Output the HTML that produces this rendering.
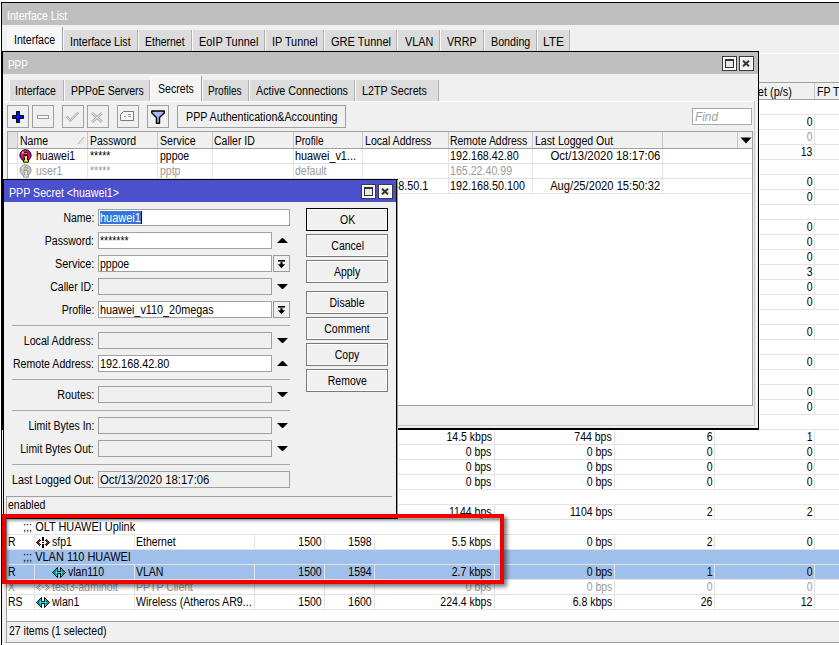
<!DOCTYPE html><html><head><meta charset="utf-8"><style>
html,body{margin:0;padding:0;width:839px;height:645px;overflow:hidden;background:#fff;}
div,svg{position:absolute;}
.t{white-space:nowrap;font-family:"Liberation Sans",sans-serif;}
</style></head><body>
<div style="left:2px;top:3px;width:837px;height:640px;background:#f0f0f0"></div>
<div style="left:1px;top:2px;width:1px;height:643px;background:#000"></div>
<div style="left:1px;top:2px;width:838px;height:1px;background:#000"></div>
<div style="left:2px;top:3px;width:837px;height:22px;background:#bfbfbf"></div>
<div class="t" style="top:9px;font-size:12px;line-height:15px;color:#fff;left:6.97px;transform-origin:0 0;transform:scaleX(0.8759);">Interface List</div>
<div style="left:7px;top:27px;width:56px;height:25px;background:#f7f7f7"></div>
<div style="left:62px;top:27px;width:1px;height:25px;background:#a0a0a0"></div>
<div class="t" style="top:33px;font-size:12px;line-height:15px;color:#000;left:14.17px;transform-origin:0 0;transform:scaleX(0.8820);">Interface</div>
<div style="left:63px;top:30px;width:75px;height:21px;background:#dcdcdc"></div>
<div style="left:137px;top:30px;width:1px;height:21px;background:#b0b0b0"></div>
<div style="left:63px;top:30px;width:1px;height:21px;background:#fafafa"></div>
<div class="t" style="top:35px;font-size:12px;line-height:15px;color:#000;left:69.97px;transform-origin:0 0;transform:scaleX(0.8818);">Interface List</div>
<div style="left:138px;top:30px;width:54px;height:21px;background:#dcdcdc"></div>
<div style="left:191px;top:30px;width:1px;height:21px;background:#b0b0b0"></div>
<div style="left:138px;top:30px;width:1px;height:21px;background:#fafafa"></div>
<div class="t" style="top:35px;font-size:12px;line-height:15px;color:#000;left:144.88px;transform-origin:0 0;transform:scaleX(0.8723);">Ethernet</div>
<div style="left:192px;top:30px;width:73px;height:21px;background:#dcdcdc"></div>
<div style="left:264px;top:30px;width:1px;height:21px;background:#b0b0b0"></div>
<div style="left:192px;top:30px;width:1px;height:21px;background:#fafafa"></div>
<div class="t" style="top:35px;font-size:12px;line-height:15px;color:#000;left:198.55px;transform-origin:0 0;transform:scaleX(0.9102);">EoIP Tunnel</div>
<div style="left:265px;top:30px;width:59px;height:21px;background:#dcdcdc"></div>
<div style="left:323px;top:30px;width:1px;height:21px;background:#b0b0b0"></div>
<div style="left:265px;top:30px;width:1px;height:21px;background:#fafafa"></div>
<div class="t" style="top:35px;font-size:12px;line-height:15px;color:#000;left:271.76px;transform-origin:0 0;transform:scaleX(0.9054);">IP Tunnel</div>
<div style="left:324px;top:30px;width:73px;height:21px;background:#dcdcdc"></div>
<div style="left:396px;top:30px;width:1px;height:21px;background:#b0b0b0"></div>
<div style="left:324px;top:30px;width:1px;height:21px;background:#fafafa"></div>
<div class="t" style="top:35px;font-size:12px;line-height:15px;color:#000;left:331.15px;transform-origin:0 0;transform:scaleX(0.9182);">GRE Tunnel</div>
<div style="left:397px;top:30px;width:43px;height:21px;background:#dcdcdc"></div>
<div style="left:439px;top:30px;width:1px;height:21px;background:#b0b0b0"></div>
<div style="left:397px;top:30px;width:1px;height:21px;background:#fafafa"></div>
<div class="t" style="top:35px;font-size:12px;line-height:15px;color:#000;left:404.56px;transform-origin:0 0;transform:scaleX(0.9028);">VLAN</div>
<div style="left:440px;top:30px;width:44px;height:21px;background:#dcdcdc"></div>
<div style="left:483px;top:30px;width:1px;height:21px;background:#b0b0b0"></div>
<div style="left:440px;top:30px;width:1px;height:21px;background:#fafafa"></div>
<div class="t" style="top:35px;font-size:12px;line-height:15px;color:#000;left:446.97px;transform-origin:0 0;transform:scaleX(0.8874);">VRRP</div>
<div style="left:484px;top:30px;width:53px;height:21px;background:#dcdcdc"></div>
<div style="left:536px;top:30px;width:1px;height:21px;background:#b0b0b0"></div>
<div style="left:484px;top:30px;width:1px;height:21px;background:#fafafa"></div>
<div class="t" style="top:35px;font-size:12px;line-height:15px;color:#000;left:490.66px;transform-origin:0 0;transform:scaleX(0.8922);">Bonding</div>
<div style="left:537px;top:30px;width:33px;height:21px;background:#dcdcdc"></div>
<div style="left:569px;top:30px;width:1px;height:21px;background:#b0b0b0"></div>
<div style="left:537px;top:30px;width:1px;height:21px;background:#fafafa"></div>
<div class="t" style="top:35px;font-size:12px;line-height:15px;color:#000;left:543.00px;transform-origin:0 0;transform:scaleX(0.9991);">LTE</div>
<div style="left:2px;top:53px;width:837px;height:1px;background:#ffffff"></div>
<div style="left:7px;top:82px;width:832px;height:539px;background:#fff"></div>
<div style="left:6px;top:82px;width:1px;height:539px;background:#a0a0a0"></div>
<div style="left:6px;top:82px;width:833px;height:1px;background:#a0a0a0"></div>
<div style="left:7px;top:83px;width:832px;height:16px;background:#f0f0f0"></div>
<div style="left:6px;top:99px;width:833px;height:1px;background:#a0a0a0"></div>
<div style="left:34px;top:83px;width:1px;height:16px;background:#c8c8c8"></div>
<div style="left:134px;top:83px;width:1px;height:16px;background:#c8c8c8"></div>
<div style="left:254px;top:83px;width:1px;height:16px;background:#c8c8c8"></div>
<div style="left:324px;top:83px;width:1px;height:16px;background:#c8c8c8"></div>
<div style="left:374px;top:83px;width:1px;height:16px;background:#c8c8c8"></div>
<div style="left:494px;top:83px;width:1px;height:16px;background:#c8c8c8"></div>
<div style="left:614px;top:83px;width:1px;height:16px;background:#c8c8c8"></div>
<div style="left:714px;top:83px;width:1px;height:16px;background:#c8c8c8"></div>
<div style="left:814px;top:83px;width:1px;height:16px;background:#c8c8c8"></div>
<div class="t" style="top:84.5px;font-size:12px;line-height:15px;color:#000;left:716.95px;transform-origin:0 0;transform:scaleX(0.9133);">Rx Packet (p/s)</div>
<div class="t" style="top:84.5px;font-size:12px;line-height:15px;color:#000;left:816.68px;transform-origin:0 0;transform:scaleX(0.8750);">FP Tx</div>
<div style="left:7px;top:550px;width:832px;height:29px;background:#9fc0ea"></div>
<div style="left:7px;top:114px;width:832px;height:1px;background:#e3e3e3"></div>
<div style="left:7px;top:129px;width:832px;height:1px;background:#e3e3e3"></div>
<div style="left:34px;top:115px;width:1px;height:14px;background:#e3e3e3"></div>
<div style="left:134px;top:115px;width:1px;height:14px;background:#e3e3e3"></div>
<div style="left:254px;top:115px;width:1px;height:14px;background:#e3e3e3"></div>
<div style="left:324px;top:115px;width:1px;height:14px;background:#e3e3e3"></div>
<div style="left:374px;top:115px;width:1px;height:14px;background:#e3e3e3"></div>
<div style="left:494px;top:115px;width:1px;height:14px;background:#e3e3e3"></div>
<div style="left:614px;top:115px;width:1px;height:14px;background:#e3e3e3"></div>
<div style="left:714px;top:115px;width:1px;height:14px;background:#e3e3e3"></div>
<div style="left:814px;top:115px;width:1px;height:14px;background:#e3e3e3"></div>
<div style="left:7px;top:144px;width:832px;height:1px;background:#e3e3e3"></div>
<div style="left:34px;top:130px;width:1px;height:14px;background:#e3e3e3"></div>
<div style="left:134px;top:130px;width:1px;height:14px;background:#e3e3e3"></div>
<div style="left:254px;top:130px;width:1px;height:14px;background:#e3e3e3"></div>
<div style="left:324px;top:130px;width:1px;height:14px;background:#e3e3e3"></div>
<div style="left:374px;top:130px;width:1px;height:14px;background:#e3e3e3"></div>
<div style="left:494px;top:130px;width:1px;height:14px;background:#e3e3e3"></div>
<div style="left:614px;top:130px;width:1px;height:14px;background:#e3e3e3"></div>
<div style="left:714px;top:130px;width:1px;height:14px;background:#e3e3e3"></div>
<div style="left:814px;top:130px;width:1px;height:14px;background:#e3e3e3"></div>
<div style="left:7px;top:159px;width:832px;height:1px;background:#e3e3e3"></div>
<div style="left:34px;top:145px;width:1px;height:14px;background:#e3e3e3"></div>
<div style="left:134px;top:145px;width:1px;height:14px;background:#e3e3e3"></div>
<div style="left:254px;top:145px;width:1px;height:14px;background:#e3e3e3"></div>
<div style="left:324px;top:145px;width:1px;height:14px;background:#e3e3e3"></div>
<div style="left:374px;top:145px;width:1px;height:14px;background:#e3e3e3"></div>
<div style="left:494px;top:145px;width:1px;height:14px;background:#e3e3e3"></div>
<div style="left:614px;top:145px;width:1px;height:14px;background:#e3e3e3"></div>
<div style="left:714px;top:145px;width:1px;height:14px;background:#e3e3e3"></div>
<div style="left:814px;top:145px;width:1px;height:14px;background:#e3e3e3"></div>
<div style="left:7px;top:174px;width:832px;height:1px;background:#e3e3e3"></div>
<div style="left:7px;top:189px;width:832px;height:1px;background:#e3e3e3"></div>
<div style="left:34px;top:175px;width:1px;height:14px;background:#e3e3e3"></div>
<div style="left:134px;top:175px;width:1px;height:14px;background:#e3e3e3"></div>
<div style="left:254px;top:175px;width:1px;height:14px;background:#e3e3e3"></div>
<div style="left:324px;top:175px;width:1px;height:14px;background:#e3e3e3"></div>
<div style="left:374px;top:175px;width:1px;height:14px;background:#e3e3e3"></div>
<div style="left:494px;top:175px;width:1px;height:14px;background:#e3e3e3"></div>
<div style="left:614px;top:175px;width:1px;height:14px;background:#e3e3e3"></div>
<div style="left:714px;top:175px;width:1px;height:14px;background:#e3e3e3"></div>
<div style="left:814px;top:175px;width:1px;height:14px;background:#e3e3e3"></div>
<div style="left:7px;top:204px;width:832px;height:1px;background:#e3e3e3"></div>
<div style="left:34px;top:190px;width:1px;height:14px;background:#e3e3e3"></div>
<div style="left:134px;top:190px;width:1px;height:14px;background:#e3e3e3"></div>
<div style="left:254px;top:190px;width:1px;height:14px;background:#e3e3e3"></div>
<div style="left:324px;top:190px;width:1px;height:14px;background:#e3e3e3"></div>
<div style="left:374px;top:190px;width:1px;height:14px;background:#e3e3e3"></div>
<div style="left:494px;top:190px;width:1px;height:14px;background:#e3e3e3"></div>
<div style="left:614px;top:190px;width:1px;height:14px;background:#e3e3e3"></div>
<div style="left:714px;top:190px;width:1px;height:14px;background:#e3e3e3"></div>
<div style="left:814px;top:190px;width:1px;height:14px;background:#e3e3e3"></div>
<div style="left:7px;top:219px;width:832px;height:1px;background:#e3e3e3"></div>
<div style="left:7px;top:234px;width:832px;height:1px;background:#e3e3e3"></div>
<div style="left:34px;top:220px;width:1px;height:14px;background:#e3e3e3"></div>
<div style="left:134px;top:220px;width:1px;height:14px;background:#e3e3e3"></div>
<div style="left:254px;top:220px;width:1px;height:14px;background:#e3e3e3"></div>
<div style="left:324px;top:220px;width:1px;height:14px;background:#e3e3e3"></div>
<div style="left:374px;top:220px;width:1px;height:14px;background:#e3e3e3"></div>
<div style="left:494px;top:220px;width:1px;height:14px;background:#e3e3e3"></div>
<div style="left:614px;top:220px;width:1px;height:14px;background:#e3e3e3"></div>
<div style="left:714px;top:220px;width:1px;height:14px;background:#e3e3e3"></div>
<div style="left:814px;top:220px;width:1px;height:14px;background:#e3e3e3"></div>
<div style="left:7px;top:249px;width:832px;height:1px;background:#e3e3e3"></div>
<div style="left:34px;top:235px;width:1px;height:14px;background:#e3e3e3"></div>
<div style="left:134px;top:235px;width:1px;height:14px;background:#e3e3e3"></div>
<div style="left:254px;top:235px;width:1px;height:14px;background:#e3e3e3"></div>
<div style="left:324px;top:235px;width:1px;height:14px;background:#e3e3e3"></div>
<div style="left:374px;top:235px;width:1px;height:14px;background:#e3e3e3"></div>
<div style="left:494px;top:235px;width:1px;height:14px;background:#e3e3e3"></div>
<div style="left:614px;top:235px;width:1px;height:14px;background:#e3e3e3"></div>
<div style="left:714px;top:235px;width:1px;height:14px;background:#e3e3e3"></div>
<div style="left:814px;top:235px;width:1px;height:14px;background:#e3e3e3"></div>
<div style="left:7px;top:264px;width:832px;height:1px;background:#e3e3e3"></div>
<div style="left:34px;top:250px;width:1px;height:14px;background:#e3e3e3"></div>
<div style="left:134px;top:250px;width:1px;height:14px;background:#e3e3e3"></div>
<div style="left:254px;top:250px;width:1px;height:14px;background:#e3e3e3"></div>
<div style="left:324px;top:250px;width:1px;height:14px;background:#e3e3e3"></div>
<div style="left:374px;top:250px;width:1px;height:14px;background:#e3e3e3"></div>
<div style="left:494px;top:250px;width:1px;height:14px;background:#e3e3e3"></div>
<div style="left:614px;top:250px;width:1px;height:14px;background:#e3e3e3"></div>
<div style="left:714px;top:250px;width:1px;height:14px;background:#e3e3e3"></div>
<div style="left:814px;top:250px;width:1px;height:14px;background:#e3e3e3"></div>
<div style="left:7px;top:279px;width:832px;height:1px;background:#e3e3e3"></div>
<div style="left:34px;top:265px;width:1px;height:14px;background:#e3e3e3"></div>
<div style="left:134px;top:265px;width:1px;height:14px;background:#e3e3e3"></div>
<div style="left:254px;top:265px;width:1px;height:14px;background:#e3e3e3"></div>
<div style="left:324px;top:265px;width:1px;height:14px;background:#e3e3e3"></div>
<div style="left:374px;top:265px;width:1px;height:14px;background:#e3e3e3"></div>
<div style="left:494px;top:265px;width:1px;height:14px;background:#e3e3e3"></div>
<div style="left:614px;top:265px;width:1px;height:14px;background:#e3e3e3"></div>
<div style="left:714px;top:265px;width:1px;height:14px;background:#e3e3e3"></div>
<div style="left:814px;top:265px;width:1px;height:14px;background:#e3e3e3"></div>
<div style="left:7px;top:294px;width:832px;height:1px;background:#e3e3e3"></div>
<div style="left:34px;top:280px;width:1px;height:14px;background:#e3e3e3"></div>
<div style="left:134px;top:280px;width:1px;height:14px;background:#e3e3e3"></div>
<div style="left:254px;top:280px;width:1px;height:14px;background:#e3e3e3"></div>
<div style="left:324px;top:280px;width:1px;height:14px;background:#e3e3e3"></div>
<div style="left:374px;top:280px;width:1px;height:14px;background:#e3e3e3"></div>
<div style="left:494px;top:280px;width:1px;height:14px;background:#e3e3e3"></div>
<div style="left:614px;top:280px;width:1px;height:14px;background:#e3e3e3"></div>
<div style="left:714px;top:280px;width:1px;height:14px;background:#e3e3e3"></div>
<div style="left:814px;top:280px;width:1px;height:14px;background:#e3e3e3"></div>
<div style="left:7px;top:309px;width:832px;height:1px;background:#e3e3e3"></div>
<div style="left:34px;top:295px;width:1px;height:14px;background:#e3e3e3"></div>
<div style="left:134px;top:295px;width:1px;height:14px;background:#e3e3e3"></div>
<div style="left:254px;top:295px;width:1px;height:14px;background:#e3e3e3"></div>
<div style="left:324px;top:295px;width:1px;height:14px;background:#e3e3e3"></div>
<div style="left:374px;top:295px;width:1px;height:14px;background:#e3e3e3"></div>
<div style="left:494px;top:295px;width:1px;height:14px;background:#e3e3e3"></div>
<div style="left:614px;top:295px;width:1px;height:14px;background:#e3e3e3"></div>
<div style="left:714px;top:295px;width:1px;height:14px;background:#e3e3e3"></div>
<div style="left:814px;top:295px;width:1px;height:14px;background:#e3e3e3"></div>
<div style="left:7px;top:324px;width:832px;height:1px;background:#e3e3e3"></div>
<div style="left:7px;top:339px;width:832px;height:1px;background:#e3e3e3"></div>
<div style="left:34px;top:325px;width:1px;height:14px;background:#e3e3e3"></div>
<div style="left:134px;top:325px;width:1px;height:14px;background:#e3e3e3"></div>
<div style="left:254px;top:325px;width:1px;height:14px;background:#e3e3e3"></div>
<div style="left:324px;top:325px;width:1px;height:14px;background:#e3e3e3"></div>
<div style="left:374px;top:325px;width:1px;height:14px;background:#e3e3e3"></div>
<div style="left:494px;top:325px;width:1px;height:14px;background:#e3e3e3"></div>
<div style="left:614px;top:325px;width:1px;height:14px;background:#e3e3e3"></div>
<div style="left:714px;top:325px;width:1px;height:14px;background:#e3e3e3"></div>
<div style="left:814px;top:325px;width:1px;height:14px;background:#e3e3e3"></div>
<div style="left:7px;top:354px;width:832px;height:1px;background:#e3e3e3"></div>
<div style="left:7px;top:369px;width:832px;height:1px;background:#e3e3e3"></div>
<div style="left:34px;top:355px;width:1px;height:14px;background:#e3e3e3"></div>
<div style="left:134px;top:355px;width:1px;height:14px;background:#e3e3e3"></div>
<div style="left:254px;top:355px;width:1px;height:14px;background:#e3e3e3"></div>
<div style="left:324px;top:355px;width:1px;height:14px;background:#e3e3e3"></div>
<div style="left:374px;top:355px;width:1px;height:14px;background:#e3e3e3"></div>
<div style="left:494px;top:355px;width:1px;height:14px;background:#e3e3e3"></div>
<div style="left:614px;top:355px;width:1px;height:14px;background:#e3e3e3"></div>
<div style="left:714px;top:355px;width:1px;height:14px;background:#e3e3e3"></div>
<div style="left:814px;top:355px;width:1px;height:14px;background:#e3e3e3"></div>
<div style="left:7px;top:384px;width:832px;height:1px;background:#e3e3e3"></div>
<div style="left:7px;top:399px;width:832px;height:1px;background:#e3e3e3"></div>
<div style="left:34px;top:385px;width:1px;height:14px;background:#e3e3e3"></div>
<div style="left:134px;top:385px;width:1px;height:14px;background:#e3e3e3"></div>
<div style="left:254px;top:385px;width:1px;height:14px;background:#e3e3e3"></div>
<div style="left:324px;top:385px;width:1px;height:14px;background:#e3e3e3"></div>
<div style="left:374px;top:385px;width:1px;height:14px;background:#e3e3e3"></div>
<div style="left:494px;top:385px;width:1px;height:14px;background:#e3e3e3"></div>
<div style="left:614px;top:385px;width:1px;height:14px;background:#e3e3e3"></div>
<div style="left:714px;top:385px;width:1px;height:14px;background:#e3e3e3"></div>
<div style="left:814px;top:385px;width:1px;height:14px;background:#e3e3e3"></div>
<div style="left:7px;top:414px;width:832px;height:1px;background:#e3e3e3"></div>
<div style="left:34px;top:400px;width:1px;height:14px;background:#e3e3e3"></div>
<div style="left:134px;top:400px;width:1px;height:14px;background:#e3e3e3"></div>
<div style="left:254px;top:400px;width:1px;height:14px;background:#e3e3e3"></div>
<div style="left:324px;top:400px;width:1px;height:14px;background:#e3e3e3"></div>
<div style="left:374px;top:400px;width:1px;height:14px;background:#e3e3e3"></div>
<div style="left:494px;top:400px;width:1px;height:14px;background:#e3e3e3"></div>
<div style="left:614px;top:400px;width:1px;height:14px;background:#e3e3e3"></div>
<div style="left:714px;top:400px;width:1px;height:14px;background:#e3e3e3"></div>
<div style="left:814px;top:400px;width:1px;height:14px;background:#e3e3e3"></div>
<div style="left:7px;top:429px;width:832px;height:1px;background:#e3e3e3"></div>
<div style="left:7px;top:444px;width:832px;height:1px;background:#e3e3e3"></div>
<div style="left:34px;top:430px;width:1px;height:14px;background:#e3e3e3"></div>
<div style="left:134px;top:430px;width:1px;height:14px;background:#e3e3e3"></div>
<div style="left:254px;top:430px;width:1px;height:14px;background:#e3e3e3"></div>
<div style="left:324px;top:430px;width:1px;height:14px;background:#e3e3e3"></div>
<div style="left:374px;top:430px;width:1px;height:14px;background:#e3e3e3"></div>
<div style="left:494px;top:430px;width:1px;height:14px;background:#e3e3e3"></div>
<div style="left:614px;top:430px;width:1px;height:14px;background:#e3e3e3"></div>
<div style="left:714px;top:430px;width:1px;height:14px;background:#e3e3e3"></div>
<div style="left:814px;top:430px;width:1px;height:14px;background:#e3e3e3"></div>
<div style="left:7px;top:459px;width:832px;height:1px;background:#e3e3e3"></div>
<div style="left:34px;top:445px;width:1px;height:14px;background:#e3e3e3"></div>
<div style="left:134px;top:445px;width:1px;height:14px;background:#e3e3e3"></div>
<div style="left:254px;top:445px;width:1px;height:14px;background:#e3e3e3"></div>
<div style="left:324px;top:445px;width:1px;height:14px;background:#e3e3e3"></div>
<div style="left:374px;top:445px;width:1px;height:14px;background:#e3e3e3"></div>
<div style="left:494px;top:445px;width:1px;height:14px;background:#e3e3e3"></div>
<div style="left:614px;top:445px;width:1px;height:14px;background:#e3e3e3"></div>
<div style="left:714px;top:445px;width:1px;height:14px;background:#e3e3e3"></div>
<div style="left:814px;top:445px;width:1px;height:14px;background:#e3e3e3"></div>
<div style="left:7px;top:474px;width:832px;height:1px;background:#e3e3e3"></div>
<div style="left:34px;top:460px;width:1px;height:14px;background:#e3e3e3"></div>
<div style="left:134px;top:460px;width:1px;height:14px;background:#e3e3e3"></div>
<div style="left:254px;top:460px;width:1px;height:14px;background:#e3e3e3"></div>
<div style="left:324px;top:460px;width:1px;height:14px;background:#e3e3e3"></div>
<div style="left:374px;top:460px;width:1px;height:14px;background:#e3e3e3"></div>
<div style="left:494px;top:460px;width:1px;height:14px;background:#e3e3e3"></div>
<div style="left:614px;top:460px;width:1px;height:14px;background:#e3e3e3"></div>
<div style="left:714px;top:460px;width:1px;height:14px;background:#e3e3e3"></div>
<div style="left:814px;top:460px;width:1px;height:14px;background:#e3e3e3"></div>
<div style="left:7px;top:489px;width:832px;height:1px;background:#e3e3e3"></div>
<div style="left:34px;top:475px;width:1px;height:14px;background:#e3e3e3"></div>
<div style="left:134px;top:475px;width:1px;height:14px;background:#e3e3e3"></div>
<div style="left:254px;top:475px;width:1px;height:14px;background:#e3e3e3"></div>
<div style="left:324px;top:475px;width:1px;height:14px;background:#e3e3e3"></div>
<div style="left:374px;top:475px;width:1px;height:14px;background:#e3e3e3"></div>
<div style="left:494px;top:475px;width:1px;height:14px;background:#e3e3e3"></div>
<div style="left:614px;top:475px;width:1px;height:14px;background:#e3e3e3"></div>
<div style="left:714px;top:475px;width:1px;height:14px;background:#e3e3e3"></div>
<div style="left:814px;top:475px;width:1px;height:14px;background:#e3e3e3"></div>
<div style="left:7px;top:504px;width:832px;height:1px;background:#e3e3e3"></div>
<div style="left:7px;top:519px;width:832px;height:1px;background:#e3e3e3"></div>
<div style="left:34px;top:505px;width:1px;height:14px;background:#e3e3e3"></div>
<div style="left:134px;top:505px;width:1px;height:14px;background:#e3e3e3"></div>
<div style="left:254px;top:505px;width:1px;height:14px;background:#e3e3e3"></div>
<div style="left:324px;top:505px;width:1px;height:14px;background:#e3e3e3"></div>
<div style="left:374px;top:505px;width:1px;height:14px;background:#e3e3e3"></div>
<div style="left:494px;top:505px;width:1px;height:14px;background:#e3e3e3"></div>
<div style="left:614px;top:505px;width:1px;height:14px;background:#e3e3e3"></div>
<div style="left:714px;top:505px;width:1px;height:14px;background:#e3e3e3"></div>
<div style="left:814px;top:505px;width:1px;height:14px;background:#e3e3e3"></div>
<div style="left:7px;top:534px;width:832px;height:1px;background:#e3e3e3"></div>
<div style="left:7px;top:549px;width:832px;height:1px;background:#e3e3e3"></div>
<div style="left:34px;top:535px;width:1px;height:14px;background:#e3e3e3"></div>
<div style="left:134px;top:535px;width:1px;height:14px;background:#e3e3e3"></div>
<div style="left:254px;top:535px;width:1px;height:14px;background:#e3e3e3"></div>
<div style="left:324px;top:535px;width:1px;height:14px;background:#e3e3e3"></div>
<div style="left:374px;top:535px;width:1px;height:14px;background:#e3e3e3"></div>
<div style="left:494px;top:535px;width:1px;height:14px;background:#e3e3e3"></div>
<div style="left:614px;top:535px;width:1px;height:14px;background:#e3e3e3"></div>
<div style="left:714px;top:535px;width:1px;height:14px;background:#e3e3e3"></div>
<div style="left:814px;top:535px;width:1px;height:14px;background:#e3e3e3"></div>
<div style="left:7px;top:564px;width:832px;height:1px;background:#e3e3e3"></div>
<div style="left:7px;top:579px;width:832px;height:1px;background:#e3e3e3"></div>
<div style="left:34px;top:565px;width:1px;height:14px;background:#e3e3e3"></div>
<div style="left:134px;top:565px;width:1px;height:14px;background:#e3e3e3"></div>
<div style="left:254px;top:565px;width:1px;height:14px;background:#e3e3e3"></div>
<div style="left:324px;top:565px;width:1px;height:14px;background:#e3e3e3"></div>
<div style="left:374px;top:565px;width:1px;height:14px;background:#e3e3e3"></div>
<div style="left:494px;top:565px;width:1px;height:14px;background:#e3e3e3"></div>
<div style="left:614px;top:565px;width:1px;height:14px;background:#e3e3e3"></div>
<div style="left:714px;top:565px;width:1px;height:14px;background:#e3e3e3"></div>
<div style="left:814px;top:565px;width:1px;height:14px;background:#e3e3e3"></div>
<div style="left:7px;top:594px;width:832px;height:1px;background:#e3e3e3"></div>
<div style="left:34px;top:580px;width:1px;height:14px;background:#e3e3e3"></div>
<div style="left:134px;top:580px;width:1px;height:14px;background:#e3e3e3"></div>
<div style="left:254px;top:580px;width:1px;height:14px;background:#e3e3e3"></div>
<div style="left:324px;top:580px;width:1px;height:14px;background:#e3e3e3"></div>
<div style="left:374px;top:580px;width:1px;height:14px;background:#e3e3e3"></div>
<div style="left:494px;top:580px;width:1px;height:14px;background:#e3e3e3"></div>
<div style="left:614px;top:580px;width:1px;height:14px;background:#e3e3e3"></div>
<div style="left:714px;top:580px;width:1px;height:14px;background:#e3e3e3"></div>
<div style="left:814px;top:580px;width:1px;height:14px;background:#e3e3e3"></div>
<div style="left:7px;top:609px;width:832px;height:1px;background:#e3e3e3"></div>
<div style="left:34px;top:595px;width:1px;height:14px;background:#e3e3e3"></div>
<div style="left:134px;top:595px;width:1px;height:14px;background:#e3e3e3"></div>
<div style="left:254px;top:595px;width:1px;height:14px;background:#e3e3e3"></div>
<div style="left:324px;top:595px;width:1px;height:14px;background:#e3e3e3"></div>
<div style="left:374px;top:595px;width:1px;height:14px;background:#e3e3e3"></div>
<div style="left:494px;top:595px;width:1px;height:14px;background:#e3e3e3"></div>
<div style="left:614px;top:595px;width:1px;height:14px;background:#e3e3e3"></div>
<div style="left:714px;top:595px;width:1px;height:14px;background:#e3e3e3"></div>
<div style="left:814px;top:595px;width:1px;height:14px;background:#e3e3e3"></div>
<div class="t" style="top:115px;font-size:12px;line-height:15px;color:#000;left:805.55px;width:6.67px;text-align:right;transform-origin:100% 0;transform:scaleX(0.8750);">0</div>
<div class="t" style="top:130px;font-size:12px;line-height:15px;color:#9a9a9a;left:805.55px;width:6.67px;text-align:right;transform-origin:100% 0;transform:scaleX(0.8750);">0</div>
<div class="t" style="top:145px;font-size:12px;line-height:15px;color:#000;left:798.88px;width:13.35px;text-align:right;transform-origin:100% 0;transform:scaleX(0.8750);">13</div>
<div class="t" style="top:175px;font-size:12px;line-height:15px;color:#000;left:805.55px;width:6.67px;text-align:right;transform-origin:100% 0;transform:scaleX(0.8750);">0</div>
<div class="t" style="top:190px;font-size:12px;line-height:15px;color:#000;left:805.55px;width:6.67px;text-align:right;transform-origin:100% 0;transform:scaleX(0.8750);">0</div>
<div class="t" style="top:220px;font-size:12px;line-height:15px;color:#000;left:805.55px;width:6.67px;text-align:right;transform-origin:100% 0;transform:scaleX(0.8750);">0</div>
<div class="t" style="top:235px;font-size:12px;line-height:15px;color:#000;left:805.55px;width:6.67px;text-align:right;transform-origin:100% 0;transform:scaleX(0.8750);">0</div>
<div class="t" style="top:250px;font-size:12px;line-height:15px;color:#000;left:805.55px;width:6.67px;text-align:right;transform-origin:100% 0;transform:scaleX(0.8750);">0</div>
<div class="t" style="top:265px;font-size:12px;line-height:15px;color:#000;left:805.55px;width:6.67px;text-align:right;transform-origin:100% 0;transform:scaleX(0.8750);">3</div>
<div class="t" style="top:280px;font-size:12px;line-height:15px;color:#000;left:805.55px;width:6.67px;text-align:right;transform-origin:100% 0;transform:scaleX(0.8750);">0</div>
<div class="t" style="top:295px;font-size:12px;line-height:15px;color:#000;left:805.55px;width:6.67px;text-align:right;transform-origin:100% 0;transform:scaleX(0.8750);">0</div>
<div class="t" style="top:325px;font-size:12px;line-height:15px;color:#000;left:805.55px;width:6.67px;text-align:right;transform-origin:100% 0;transform:scaleX(0.8750);">0</div>
<div class="t" style="top:355px;font-size:12px;line-height:15px;color:#000;left:805.55px;width:6.67px;text-align:right;transform-origin:100% 0;transform:scaleX(0.8750);">0</div>
<div class="t" style="top:385px;font-size:12px;line-height:15px;color:#000;left:805.55px;width:6.67px;text-align:right;transform-origin:100% 0;transform:scaleX(0.8750);">0</div>
<div class="t" style="top:400px;font-size:12px;line-height:15px;color:#000;left:805.55px;width:6.67px;text-align:right;transform-origin:100% 0;transform:scaleX(0.8750);">0</div>
<div class="t" style="top:430px;font-size:12px;line-height:15px;color:#000;left:439.59px;width:52.04px;text-align:right;transform-origin:100% 0;transform:scaleX(0.8750);">14.5 kbps</div>
<div class="t" style="top:430px;font-size:12px;line-height:15px;color:#000;left:569.32px;width:42.70px;text-align:right;transform-origin:100% 0;transform:scaleX(0.8750);">744 bps</div>
<div class="t" style="top:430px;font-size:12px;line-height:15px;color:#000;left:705.85px;width:6.67px;text-align:right;transform-origin:100% 0;transform:scaleX(0.8750);">6</div>
<div class="t" style="top:430px;font-size:12px;line-height:15px;color:#000;left:805.55px;width:6.67px;text-align:right;transform-origin:100% 0;transform:scaleX(0.8750);">1</div>
<div class="t" style="top:445px;font-size:12px;line-height:15px;color:#000;left:462.27px;width:29.35px;text-align:right;transform-origin:100% 0;transform:scaleX(0.8750);">0 bps</div>
<div class="t" style="top:445px;font-size:12px;line-height:15px;color:#000;left:582.67px;width:29.35px;text-align:right;transform-origin:100% 0;transform:scaleX(0.8750);">0 bps</div>
<div class="t" style="top:445px;font-size:12px;line-height:15px;color:#000;left:705.85px;width:6.67px;text-align:right;transform-origin:100% 0;transform:scaleX(0.8750);">0</div>
<div class="t" style="top:445px;font-size:12px;line-height:15px;color:#000;left:805.55px;width:6.67px;text-align:right;transform-origin:100% 0;transform:scaleX(0.8750);">0</div>
<div class="t" style="top:460px;font-size:12px;line-height:15px;color:#000;left:462.27px;width:29.35px;text-align:right;transform-origin:100% 0;transform:scaleX(0.8750);">0 bps</div>
<div class="t" style="top:460px;font-size:12px;line-height:15px;color:#000;left:582.67px;width:29.35px;text-align:right;transform-origin:100% 0;transform:scaleX(0.8750);">0 bps</div>
<div class="t" style="top:460px;font-size:12px;line-height:15px;color:#000;left:705.85px;width:6.67px;text-align:right;transform-origin:100% 0;transform:scaleX(0.8750);">0</div>
<div class="t" style="top:460px;font-size:12px;line-height:15px;color:#000;left:805.55px;width:6.67px;text-align:right;transform-origin:100% 0;transform:scaleX(0.8750);">0</div>
<div class="t" style="top:475px;font-size:12px;line-height:15px;color:#000;left:462.27px;width:29.35px;text-align:right;transform-origin:100% 0;transform:scaleX(0.8750);">0 bps</div>
<div class="t" style="top:475px;font-size:12px;line-height:15px;color:#000;left:582.67px;width:29.35px;text-align:right;transform-origin:100% 0;transform:scaleX(0.8750);">0 bps</div>
<div class="t" style="top:475px;font-size:12px;line-height:15px;color:#000;left:705.85px;width:6.67px;text-align:right;transform-origin:100% 0;transform:scaleX(0.8750);">0</div>
<div class="t" style="top:475px;font-size:12px;line-height:15px;color:#000;left:805.55px;width:6.67px;text-align:right;transform-origin:100% 0;transform:scaleX(0.8750);">0</div>
<div class="t" style="top:505px;font-size:12px;line-height:15px;color:#000;left:443.14px;width:48.48px;text-align:right;transform-origin:100% 0;transform:scaleX(0.8750);">1144 bps</div>
<div class="t" style="top:505px;font-size:12px;line-height:15px;color:#000;left:563.54px;width:48.48px;text-align:right;transform-origin:100% 0;transform:scaleX(0.8750);">1104 bps</div>
<div class="t" style="top:505px;font-size:12px;line-height:15px;color:#000;left:705.85px;width:6.67px;text-align:right;transform-origin:100% 0;transform:scaleX(0.8750);">2</div>
<div class="t" style="top:505px;font-size:12px;line-height:15px;color:#000;left:805.55px;width:6.67px;text-align:right;transform-origin:100% 0;transform:scaleX(0.8750);">2</div>
<div class="t" style="top:535px;font-size:12px;line-height:15px;color:#000;left:8.47px;transform-origin:0 0;transform:scaleX(0.8750);">R</div>
<div class="t" style="top:535px;font-size:12px;line-height:15px;color:#000;left:52.27px;transform-origin:0 0;transform:scaleX(0.8750);">sfp1</div>
<div class="t" style="top:535px;font-size:12px;line-height:15px;color:#000;left:136.47px;transform-origin:0 0;transform:scaleX(0.8750);">Ethernet</div>
<div class="t" style="top:535px;font-size:12px;line-height:15px;color:#000;left:295.33px;width:26.69px;text-align:right;transform-origin:100% 0;transform:scaleX(0.8750);">1500</div>
<div class="t" style="top:535px;font-size:12px;line-height:15px;color:#000;left:345.23px;width:26.69px;text-align:right;transform-origin:100% 0;transform:scaleX(0.8750);">1598</div>
<div class="t" style="top:535px;font-size:12px;line-height:15px;color:#000;left:446.26px;width:45.36px;text-align:right;transform-origin:100% 0;transform:scaleX(0.8750);">5.5 kbps</div>
<div class="t" style="top:535px;font-size:12px;line-height:15px;color:#000;left:582.67px;width:29.35px;text-align:right;transform-origin:100% 0;transform:scaleX(0.8750);">0 bps</div>
<div class="t" style="top:535px;font-size:12px;line-height:15px;color:#000;left:705.85px;width:6.67px;text-align:right;transform-origin:100% 0;transform:scaleX(0.8750);">2</div>
<div class="t" style="top:535px;font-size:12px;line-height:15px;color:#000;left:805.55px;width:6.67px;text-align:right;transform-origin:100% 0;transform:scaleX(0.8750);">0</div>
<div class="t" style="top:565px;font-size:12px;line-height:15px;color:#000;left:8.47px;transform-origin:0 0;transform:scaleX(0.8750);">R</div>
<div class="t" style="top:565px;font-size:12px;line-height:15px;color:#000;left:68.47px;transform-origin:0 0;transform:scaleX(0.8750);">vlan110</div>
<div class="t" style="top:565px;font-size:12px;line-height:15px;color:#000;left:136.47px;transform-origin:0 0;transform:scaleX(0.8750);">VLAN</div>
<div class="t" style="top:565px;font-size:12px;line-height:15px;color:#000;left:295.33px;width:26.69px;text-align:right;transform-origin:100% 0;transform:scaleX(0.8750);">1500</div>
<div class="t" style="top:565px;font-size:12px;line-height:15px;color:#000;left:345.23px;width:26.69px;text-align:right;transform-origin:100% 0;transform:scaleX(0.8750);">1594</div>
<div class="t" style="top:565px;font-size:12px;line-height:15px;color:#000;left:446.26px;width:45.36px;text-align:right;transform-origin:100% 0;transform:scaleX(0.8750);">2.7 kbps</div>
<div class="t" style="top:565px;font-size:12px;line-height:15px;color:#000;left:582.67px;width:29.35px;text-align:right;transform-origin:100% 0;transform:scaleX(0.8750);">0 bps</div>
<div class="t" style="top:565px;font-size:12px;line-height:15px;color:#000;left:705.85px;width:6.67px;text-align:right;transform-origin:100% 0;transform:scaleX(0.8750);">1</div>
<div class="t" style="top:565px;font-size:12px;line-height:15px;color:#000;left:805.55px;width:6.67px;text-align:right;transform-origin:100% 0;transform:scaleX(0.8750);">0</div>
<div class="t" style="top:580px;font-size:12px;line-height:15px;color:#9a9a9a;left:8.47px;transform-origin:0 0;transform:scaleX(0.8750);">X</div>
<div class="t" style="top:580px;font-size:12px;line-height:15px;color:#9a9a9a;left:52.27px;transform-origin:0 0;transform:scaleX(0.8750);">test3-adminolt</div>
<div class="t" style="top:580px;font-size:12px;line-height:15px;color:#9a9a9a;left:136.47px;transform-origin:0 0;transform:scaleX(0.8750);">PPTP Client</div>
<div class="t" style="top:580px;font-size:12px;line-height:15px;color:#9a9a9a;left:462.27px;width:29.35px;text-align:right;transform-origin:100% 0;transform:scaleX(0.8750);">0 bps</div>
<div class="t" style="top:580px;font-size:12px;line-height:15px;color:#9a9a9a;left:582.67px;width:29.35px;text-align:right;transform-origin:100% 0;transform:scaleX(0.8750);">0 bps</div>
<div class="t" style="top:580px;font-size:12px;line-height:15px;color:#9a9a9a;left:705.85px;width:6.67px;text-align:right;transform-origin:100% 0;transform:scaleX(0.8750);">0</div>
<div class="t" style="top:580px;font-size:12px;line-height:15px;color:#9a9a9a;left:805.55px;width:6.67px;text-align:right;transform-origin:100% 0;transform:scaleX(0.8750);">0</div>
<div class="t" style="top:595px;font-size:12px;line-height:15px;color:#000;left:8.47px;transform-origin:0 0;transform:scaleX(0.8750);">RS</div>
<div class="t" style="top:595px;font-size:12px;line-height:15px;color:#000;left:52.27px;transform-origin:0 0;transform:scaleX(0.8750);">wlan1</div>
<div class="t" style="top:595px;font-size:12px;line-height:15px;color:#000;left:136.47px;transform-origin:0 0;transform:scaleX(0.8843);">Wireless (Atheros AR9...</div>
<div class="t" style="top:595px;font-size:12px;line-height:15px;color:#000;left:295.33px;width:26.69px;text-align:right;transform-origin:100% 0;transform:scaleX(0.8750);">1500</div>
<div class="t" style="top:595px;font-size:12px;line-height:15px;color:#000;left:345.23px;width:26.69px;text-align:right;transform-origin:100% 0;transform:scaleX(0.8750);">1600</div>
<div class="t" style="top:595px;font-size:12px;line-height:15px;color:#000;left:432.92px;width:58.71px;text-align:right;transform-origin:100% 0;transform:scaleX(0.8750);">224.4 kbps</div>
<div class="t" style="top:595px;font-size:12px;line-height:15px;color:#000;left:566.66px;width:45.36px;text-align:right;transform-origin:100% 0;transform:scaleX(0.8750);">6.8 kbps</div>
<div class="t" style="top:595px;font-size:12px;line-height:15px;color:#000;left:699.18px;width:13.35px;text-align:right;transform-origin:100% 0;transform:scaleX(0.8750);">26</div>
<div class="t" style="top:595px;font-size:12px;line-height:15px;color:#000;left:798.88px;width:13.35px;text-align:right;transform-origin:100% 0;transform:scaleX(0.8750);">12</div>
<div class="t" style="top:520px;font-size:12px;line-height:15px;color:#000;left:22.95px;transform-origin:0 0;transform:scaleX(0.9105);">;;; OLT HUAWEI Uplink</div>
<div class="t" style="top:550px;font-size:12px;line-height:15px;color:#000;left:22.95px;transform-origin:0 0;transform:scaleX(0.9142);">;;; VLAN 110 HUAWEI</div>
<div style="left:6px;top:621px;width:833px;height:1px;background:#a0a0a0"></div>
<div style="left:6px;top:621px;width:1px;height:21px;background:#a0a0a0"></div>
<div style="left:5px;top:642px;width:834px;height:1px;background:#a0a0a0"></div>
<div class="t" style="top:624px;font-size:12px;line-height:15px;color:#000;left:8.77px;transform-origin:0 0;transform:scaleX(0.8751);">27 items (1 selected)</div>
<div style="left:2px;top:643px;width:837px;height:2px;background:#fff"></div>
<svg style="position:absolute;left:36px;top:537px;shape-rendering:crispEdges" width="14" height="11" viewBox="0 0 14 11"><rect x="3" y="2" width="1" height="1" fill="#000"/><rect x="2" y="3" width="1" height="1" fill="#000"/><rect x="3" y="3" width="1" height="1" fill="#f01010"/><rect x="4" y="3" width="1" height="1" fill="#000"/><rect x="1" y="4" width="1" height="1" fill="#000"/><rect x="2" y="4" width="1" height="1" fill="#f01010"/><rect x="3" y="4" width="1" height="1" fill="#000"/><rect x="0" y="5" width="1" height="1" fill="#000"/><rect x="1" y="5" width="1" height="1" fill="#f01010"/><rect x="2" y="5" width="1" height="1" fill="#000"/><rect x="1" y="6" width="1" height="1" fill="#000"/><rect x="2" y="6" width="1" height="1" fill="#f01010"/><rect x="3" y="6" width="1" height="1" fill="#000"/><rect x="2" y="7" width="1" height="1" fill="#000"/><rect x="3" y="7" width="1" height="1" fill="#f01010"/><rect x="4" y="7" width="1" height="1" fill="#000"/><rect x="3" y="8" width="1" height="1" fill="#000"/><rect x="10" y="2" width="1" height="1" fill="#000"/><rect x="9" y="3" width="1" height="1" fill="#000"/><rect x="10" y="3" width="1" height="1" fill="#f01010"/><rect x="11" y="3" width="1" height="1" fill="#000"/><rect x="10" y="4" width="1" height="1" fill="#000"/><rect x="11" y="4" width="1" height="1" fill="#f01010"/><rect x="12" y="4" width="1" height="1" fill="#000"/><rect x="11" y="5" width="1" height="1" fill="#000"/><rect x="12" y="5" width="1" height="1" fill="#f01010"/><rect x="13" y="5" width="1" height="1" fill="#000"/><rect x="10" y="6" width="1" height="1" fill="#000"/><rect x="11" y="6" width="1" height="1" fill="#f01010"/><rect x="12" y="6" width="1" height="1" fill="#000"/><rect x="9" y="7" width="1" height="1" fill="#000"/><rect x="10" y="7" width="1" height="1" fill="#f01010"/><rect x="11" y="7" width="1" height="1" fill="#000"/><rect x="10" y="8" width="1" height="1" fill="#000"/><rect x="6" y="0" width="2" height="4" fill="#000"/><rect x="6" y="5" width="2" height="1" fill="#000"/><rect x="6" y="7" width="2" height="4" fill="#000"/></svg>
<svg style="position:absolute;left:52px;top:567px;" width="14" height="11" viewBox="0 0 14 11"><path d="M0.5,5.5 L5.5,0.5 L5.5,10.5 Z" fill="#00f0f0" stroke="#000" stroke-width="1" stroke-linejoin="miter"/><path d="M13.5,5.5 L8.5,0.5 L8.5,10.5 Z" fill="#00f0f0" stroke="#000" stroke-width="1"/><rect x="5.5" y="4.5" width="3" height="2" fill="#00f0f0" stroke="#000" stroke-width="1"/><rect x="5" y="4.9" width="4" height="1.2" fill="#00f0f0"/><path d="M4,3.5 L2.2,5.5 L4,7.5 M10,3.5 L11.8,5.5 L10,7.5" fill="none" stroke="#000" stroke-width="0.9"/></svg>
<svg style="position:absolute;left:36px;top:582px;shape-rendering:crispEdges" width="14" height="11" viewBox="0 0 14 11"><rect x="3" y="2" width="1" height="1" fill="#a8a8a8"/><rect x="2" y="3" width="1" height="1" fill="#a8a8a8"/><rect x="3" y="3" width="1" height="1" fill="#f4f4f4"/><rect x="4" y="3" width="1" height="1" fill="#a8a8a8"/><rect x="1" y="4" width="1" height="1" fill="#a8a8a8"/><rect x="2" y="4" width="1" height="1" fill="#f4f4f4"/><rect x="3" y="4" width="1" height="1" fill="#a8a8a8"/><rect x="0" y="5" width="1" height="1" fill="#a8a8a8"/><rect x="1" y="5" width="1" height="1" fill="#f4f4f4"/><rect x="2" y="5" width="1" height="1" fill="#a8a8a8"/><rect x="1" y="6" width="1" height="1" fill="#a8a8a8"/><rect x="2" y="6" width="1" height="1" fill="#f4f4f4"/><rect x="3" y="6" width="1" height="1" fill="#a8a8a8"/><rect x="2" y="7" width="1" height="1" fill="#a8a8a8"/><rect x="3" y="7" width="1" height="1" fill="#f4f4f4"/><rect x="4" y="7" width="1" height="1" fill="#a8a8a8"/><rect x="3" y="8" width="1" height="1" fill="#a8a8a8"/><rect x="10" y="2" width="1" height="1" fill="#a8a8a8"/><rect x="9" y="3" width="1" height="1" fill="#a8a8a8"/><rect x="10" y="3" width="1" height="1" fill="#f4f4f4"/><rect x="11" y="3" width="1" height="1" fill="#a8a8a8"/><rect x="10" y="4" width="1" height="1" fill="#a8a8a8"/><rect x="11" y="4" width="1" height="1" fill="#f4f4f4"/><rect x="12" y="4" width="1" height="1" fill="#a8a8a8"/><rect x="11" y="5" width="1" height="1" fill="#a8a8a8"/><rect x="12" y="5" width="1" height="1" fill="#f4f4f4"/><rect x="13" y="5" width="1" height="1" fill="#a8a8a8"/><rect x="10" y="6" width="1" height="1" fill="#a8a8a8"/><rect x="11" y="6" width="1" height="1" fill="#f4f4f4"/><rect x="12" y="6" width="1" height="1" fill="#a8a8a8"/><rect x="9" y="7" width="1" height="1" fill="#a8a8a8"/><rect x="10" y="7" width="1" height="1" fill="#f4f4f4"/><rect x="11" y="7" width="1" height="1" fill="#a8a8a8"/><rect x="10" y="8" width="1" height="1" fill="#a8a8a8"/><rect x="6" y="5" width="2" height="1" fill="#a8a8a8"/></svg>
<svg style="position:absolute;left:36px;top:597px;" width="14" height="11" viewBox="0 0 14 11"><path d="M0.5,5.5 L5.5,0.5 L5.5,10.5 Z" fill="#00f0f0" stroke="#000" stroke-width="1" stroke-linejoin="miter"/><path d="M13.5,5.5 L8.5,0.5 L8.5,10.5 Z" fill="#00f0f0" stroke="#000" stroke-width="1"/><rect x="5.5" y="4.5" width="3" height="2" fill="#00f0f0" stroke="#000" stroke-width="1"/><rect x="5" y="4.9" width="4" height="1.2" fill="#00f0f0"/><path d="M4,3.5 L2.2,5.5 L4,7.5 M10,3.5 L11.8,5.5 L10,7.5" fill="none" stroke="#000" stroke-width="0.9"/></svg>
<div style="left:1px;top:51px;width:758px;height:379px;background:#f0f0f0"></div>
<div style="left:1px;top:51px;width:758px;height:1px;background:#000"></div>
<div style="left:1px;top:51px;width:2px;height:379px;background:#000"></div>
<div style="left:758px;top:51px;width:1px;height:379px;background:#000"></div>
<div style="left:1px;top:428px;width:758px;height:2px;background:#000"></div>
<div style="left:3px;top:52px;width:755px;height:22px;background:#bfbfbf"></div>
<div class="t" style="top:57.5px;font-size:12px;line-height:15px;color:#fff;left:8.10px;transform-origin:0 0;transform:scaleX(0.8256);">PPP</div>
<div style="left:722px;top:56px;width:15px;height:15px;background:#f0f0f0;border:1px solid #3a3a3a;box-sizing:border-box;box-shadow:inset 0 0 0 1px #fff"></div>
<div style="left:739px;top:56px;width:15px;height:15px;background:#f0f0f0;border:1px solid #3a3a3a;box-sizing:border-box;box-shadow:inset 0 0 0 1px #fff"></div>
<div style="left:725px;top:59px;width:9px;height:9px;border:1px solid #333;border-top-width:2px;box-sizing:border-box;background:#e8e8e8"></div>
<svg style="position:absolute;left:742px;top:60px;" width="8" height="7" viewBox="0 0 8 7"><path d="M1,0.8 L7,6.2 M7,0.8 L1,6.2" stroke="#333" stroke-width="2"/></svg>
<div style="left:9px;top:80px;width:55px;height:21px;background:#dcdcdc"></div>
<div style="left:63px;top:80px;width:1px;height:21px;background:#b0b0b0"></div>
<div style="left:9px;top:80px;width:1px;height:21px;background:#fafafa"></div>
<div class="t" style="top:84px;font-size:12px;line-height:15px;color:#000;left:14.97px;transform-origin:0 0;transform:scaleX(0.8776);">Interface</div>
<div style="left:64px;top:80px;width:86px;height:21px;background:#dcdcdc"></div>
<div style="left:149px;top:80px;width:1px;height:21px;background:#b0b0b0"></div>
<div style="left:64px;top:80px;width:1px;height:21px;background:#fafafa"></div>
<div class="t" style="top:84px;font-size:12px;line-height:15px;color:#000;left:70.78px;transform-origin:0 0;transform:scaleX(0.8729);">PPPoE Servers</div>
<div style="left:150px;top:76px;width:52px;height:25px;background:#f4f4f4;border-top:1px solid #fff;border-left:1px solid #fff;box-sizing:border-box"></div>
<div style="left:201px;top:76px;width:1px;height:25px;background:#a0a0a0"></div>
<div class="t" style="top:81.5px;font-size:12px;line-height:15px;color:#000;left:157.67px;transform-origin:0 0;transform:scaleX(0.8820);">Secrets</div>
<div style="left:202px;top:80px;width:47px;height:21px;background:#dcdcdc"></div>
<div style="left:248px;top:80px;width:1px;height:21px;background:#b0b0b0"></div>
<div style="left:202px;top:80px;width:1px;height:21px;background:#fafafa"></div>
<div class="t" style="top:84px;font-size:12px;line-height:15px;color:#000;left:208.00px;transform-origin:0 0;transform:scaleX(0.8407);">Profiles</div>
<div style="left:249px;top:80px;width:106px;height:21px;background:#dcdcdc"></div>
<div style="left:354px;top:80px;width:1px;height:21px;background:#b0b0b0"></div>
<div style="left:249px;top:80px;width:1px;height:21px;background:#fafafa"></div>
<div class="t" style="top:84px;font-size:12px;line-height:15px;color:#000;left:255.66px;transform-origin:0 0;transform:scaleX(0.8956);">Active Connections</div>
<div style="left:355px;top:80px;width:84px;height:21px;background:#dcdcdc"></div>
<div style="left:438px;top:80px;width:1px;height:21px;background:#b0b0b0"></div>
<div style="left:355px;top:80px;width:1px;height:21px;background:#fafafa"></div>
<div class="t" style="top:84px;font-size:12px;line-height:15px;color:#000;left:361.66px;transform-origin:0 0;transform:scaleX(0.8967);">L2TP Secrets</div>
<div style="left:3px;top:101px;width:752px;height:1px;background:#ffffff"></div>
<div style="left:754px;top:101px;width:1px;height:325px;background:#c8c8c8"></div>
<div style="left:7px;top:105px;width:22px;height:23px;background:#f0f0f0;border:1px solid #a0a0a0;box-sizing:border-box"></div>
<div style="left:32px;top:105px;width:22px;height:23px;background:#f0f0f0;border:1px solid #a0a0a0;box-sizing:border-box"></div>
<div style="left:62px;top:105px;width:22px;height:23px;background:#f0f0f0;border:1px solid #a0a0a0;box-sizing:border-box"></div>
<div style="left:87px;top:105px;width:22px;height:23px;background:#f0f0f0;border:1px solid #a0a0a0;box-sizing:border-box"></div>
<div style="left:117px;top:105px;width:22px;height:23px;background:#f0f0f0;border:1px solid #a0a0a0;box-sizing:border-box"></div>
<div style="left:147px;top:105px;width:22px;height:23px;background:#f0f0f0;border:1px solid #a0a0a0;box-sizing:border-box"></div>
<div style="left:177px;top:105px;width:169px;height:23px;background:#f0f0f0;border:1px solid #a0a0a0;box-sizing:border-box"></div>
<div class="t" style="top:110px;font-size:12px;line-height:15px;color:#000;left:186.17px;transform-origin:0 0;transform:scaleX(0.8911);">PPP Authentication&amp;Accounting</div>
<svg style="position:absolute;left:12px;top:111px;" width="12" height="12" viewBox="0 0 12 12"><path d="M4.5,0.5 H7.5 V4.5 H11.5 V7.5 H7.5 V11.5 H4.5 V7.5 H0.5 V4.5 H4.5 Z" fill="#0010f0" stroke="#000" stroke-width="1"/></svg>
<div style="left:37px;top:115px;width:12px;height:4px;border:1px solid #9a9a9a;box-sizing:border-box;background:#f8f8f8"></div>
<svg style="position:absolute;left:66px;top:111px;" width="13" height="11" viewBox="0 0 13 11"><path d="M0.8,5.5 L4.5,9.5 L12.2,1.5" fill="none" stroke="#a8a8a8" stroke-width="2.2"/><path d="M0.8,5.5 L4.5,9.5 L12.2,1.5" fill="none" stroke="#f4f4f4" stroke-width="0.8"/></svg>
<svg style="position:absolute;left:91px;top:112px;" width="12" height="11" viewBox="0 0 12 11"><path d="M1,1 L11,10 M11,1 L1,10" stroke="#a8a8a8" stroke-width="2.6"/><path d="M1,1 L11,10 M11,1 L1,10" stroke="#f4f4f4" stroke-width="1"/></svg>
<svg style="position:absolute;left:120px;top:111px;" width="15" height="11" viewBox="0 0 15 11"><path d="M3.5,0.5 H13.5 V9.5 H0.5 V3.5 Z" fill="#f8f8f8" stroke="#7a7a7a"/><path d="M8,3.5 H11 M8,5.5 H11 M4,5.5 H6" stroke="#9a9a9a"/></svg>
<svg style="position:absolute;left:151px;top:110px;" width="14" height="14" viewBox="0 0 14 14"><path d="M0.8,1 H13.2 V3 L8.5,7.5 V13.2 H5.5 V7.5 L0.8,3 Z" fill="#a8b8f0" stroke="#000" stroke-width="1.4" stroke-linejoin="round"/></svg>
<div style="left:692px;top:108px;width:60px;height:17px;background:#fff;border:1px solid #a8a8a8;box-sizing:border-box"></div>
<div class="t" style="top:110px;font-size:12px;line-height:15px;color:#a0a0a0;font-style:italic;left:694.81px;transform-origin:0 0;transform:scaleX(0.9847);">Find</div>
<div style="left:7px;top:131px;width:746px;height:274px;background:#fff"></div>
<div style="left:7px;top:131px;width:746px;height:1px;background:#a0a0a0"></div>
<div style="left:7px;top:131px;width:1px;height:274px;background:#a0a0a0"></div>
<div style="left:752px;top:131px;width:1px;height:274px;background:#a0a0a0"></div>
<div style="left:8px;top:132px;width:744px;height:16px;background:#f0f0f0"></div>
<div style="left:8px;top:132px;width:9px;height:16px;background:#e2e2e2"></div>
<div style="left:7px;top:148px;width:746px;height:1px;background:#a0a0a0"></div>
<div style="left:17px;top:132px;width:1px;height:16px;background:#c8c8c8"></div>
<div style="left:87px;top:132px;width:1px;height:16px;background:#c8c8c8"></div>
<div style="left:157px;top:132px;width:1px;height:16px;background:#c8c8c8"></div>
<div style="left:212px;top:132px;width:1px;height:16px;background:#c8c8c8"></div>
<div style="left:293px;top:132px;width:1px;height:16px;background:#c8c8c8"></div>
<div style="left:362px;top:132px;width:1px;height:16px;background:#c8c8c8"></div>
<div style="left:448px;top:132px;width:1px;height:16px;background:#c8c8c8"></div>
<div style="left:532px;top:132px;width:1px;height:16px;background:#c8c8c8"></div>
<div style="left:662px;top:132px;width:1px;height:16px;background:#c8c8c8"></div>
<div style="left:737px;top:132px;width:1px;height:16px;background:#c8c8c8"></div>
<div class="t" style="top:133.5px;font-size:12px;line-height:15px;color:#000;left:20.08px;transform-origin:0 0;transform:scaleX(0.8750);">Name</div>
<div class="t" style="top:133.5px;font-size:12px;line-height:15px;color:#000;left:89.58px;transform-origin:0 0;transform:scaleX(0.8726);">Password</div>
<div class="t" style="top:133.5px;font-size:12px;line-height:15px;color:#000;left:159.77px;transform-origin:0 0;transform:scaleX(0.8894);">Service</div>
<div class="t" style="top:133.5px;font-size:12px;line-height:15px;color:#000;left:214.18px;transform-origin:0 0;transform:scaleX(0.8736);">Caller ID</div>
<div class="t" style="top:133.5px;font-size:12px;line-height:15px;color:#000;left:294.69px;transform-origin:0 0;transform:scaleX(0.8421);">Profile</div>
<div class="t" style="top:133.5px;font-size:12px;line-height:15px;color:#000;left:364.87px;transform-origin:0 0;transform:scaleX(0.8806);">Local Address</div>
<div class="t" style="top:133.5px;font-size:12px;line-height:15px;color:#000;left:450.38px;transform-origin:0 0;transform:scaleX(0.8699);">Remote Address</div>
<div class="t" style="top:133.5px;font-size:12px;line-height:15px;color:#000;left:535.27px;transform-origin:0 0;transform:scaleX(0.8799);">Last Logged Out</div>
<svg style="position:absolute;left:77px;top:137px;" width="8" height="8" viewBox="0 0 8 8"><path d="M7,0 L7,7 L0,7 Z" fill="#e8e8e8"/><path d="M1,7 L7,0" stroke="#b0b0b0" stroke-width="1"/></svg>
<svg style="position:absolute;left:740px;top:137px;" width="12" height="7" viewBox="0 0 12 7"><path d="M0.5,0.5 H11.5 L6,6.5 Z" fill="#000"/></svg>
<div style="left:8px;top:163px;width:744px;height:1px;background:#e3e3e3"></div>
<div style="left:17px;top:149px;width:1px;height:14px;background:#e3e3e3"></div>
<div style="left:87px;top:149px;width:1px;height:14px;background:#e3e3e3"></div>
<div style="left:157px;top:149px;width:1px;height:14px;background:#e3e3e3"></div>
<div style="left:212px;top:149px;width:1px;height:14px;background:#e3e3e3"></div>
<div style="left:293px;top:149px;width:1px;height:14px;background:#e3e3e3"></div>
<div style="left:362px;top:149px;width:1px;height:14px;background:#e3e3e3"></div>
<div style="left:448px;top:149px;width:1px;height:14px;background:#e3e3e3"></div>
<div style="left:532px;top:149px;width:1px;height:14px;background:#e3e3e3"></div>
<div style="left:662px;top:149px;width:1px;height:14px;background:#e3e3e3"></div>
<div style="left:8px;top:178px;width:744px;height:1px;background:#e3e3e3"></div>
<div style="left:17px;top:164px;width:1px;height:14px;background:#e3e3e3"></div>
<div style="left:87px;top:164px;width:1px;height:14px;background:#e3e3e3"></div>
<div style="left:157px;top:164px;width:1px;height:14px;background:#e3e3e3"></div>
<div style="left:212px;top:164px;width:1px;height:14px;background:#e3e3e3"></div>
<div style="left:293px;top:164px;width:1px;height:14px;background:#e3e3e3"></div>
<div style="left:362px;top:164px;width:1px;height:14px;background:#e3e3e3"></div>
<div style="left:448px;top:164px;width:1px;height:14px;background:#e3e3e3"></div>
<div style="left:532px;top:164px;width:1px;height:14px;background:#e3e3e3"></div>
<div style="left:662px;top:164px;width:1px;height:14px;background:#e3e3e3"></div>
<div style="left:8px;top:193px;width:744px;height:1px;background:#e3e3e3"></div>
<div style="left:17px;top:179px;width:1px;height:14px;background:#e3e3e3"></div>
<div style="left:87px;top:179px;width:1px;height:14px;background:#e3e3e3"></div>
<div style="left:157px;top:179px;width:1px;height:14px;background:#e3e3e3"></div>
<div style="left:212px;top:179px;width:1px;height:14px;background:#e3e3e3"></div>
<div style="left:293px;top:179px;width:1px;height:14px;background:#e3e3e3"></div>
<div style="left:362px;top:179px;width:1px;height:14px;background:#e3e3e3"></div>
<div style="left:448px;top:179px;width:1px;height:14px;background:#e3e3e3"></div>
<div style="left:532px;top:179px;width:1px;height:14px;background:#e3e3e3"></div>
<div style="left:662px;top:179px;width:1px;height:14px;background:#e3e3e3"></div>
<div class="t" style="top:149px;font-size:12px;line-height:15px;color:#000;left:35.58px;transform-origin:0 0;transform:scaleX(0.8750);">huawei1</div>
<div class="t" style="top:149px;font-size:12px;line-height:15px;color:#000;left:89.97px;transform-origin:0 0;transform:scaleX(0.8750);">*****</div>
<div class="t" style="top:149px;font-size:12px;line-height:15px;color:#000;left:159.78px;transform-origin:0 0;transform:scaleX(0.8750);">pppoe</div>
<div class="t" style="top:149px;font-size:12px;line-height:15px;color:#000;left:294.66px;transform-origin:0 0;transform:scaleX(0.9040);">huawei_v1...</div>
<div class="t" style="top:149px;font-size:12px;line-height:15px;color:#000;left:450.36px;transform-origin:0 0;transform:scaleX(0.8952);">192.168.42.80</div>
<div class="t" style="top:149px;font-size:12px;line-height:15px;color:#000;left:544.85px;width:115.42px;text-align:right;transform-origin:100% 0;transform:scaleX(0.9526);">Oct/13/2020 18:17:06</div>
<div class="t" style="top:164px;font-size:12px;line-height:15px;color:#9a9a9a;left:35.58px;transform-origin:0 0;transform:scaleX(0.8750);">user1</div>
<div class="t" style="top:164px;font-size:12px;line-height:15px;color:#9a9a9a;left:89.97px;transform-origin:0 0;transform:scaleX(0.8750);">*****</div>
<div class="t" style="top:164px;font-size:12px;line-height:15px;color:#9a9a9a;left:159.78px;transform-origin:0 0;transform:scaleX(0.8750);">pptp</div>
<div class="t" style="top:164px;font-size:12px;line-height:15px;color:#9a9a9a;left:294.68px;transform-origin:0 0;transform:scaleX(0.8750);">default</div>
<div class="t" style="top:164px;font-size:12px;line-height:15px;color:#9a9a9a;left:450.37px;transform-origin:0 0;transform:scaleX(0.8861);">165.22.40.99</div>
<div class="t" style="top:179px;font-size:12px;line-height:15px;color:#000;left:364.86px;transform-origin:0 0;transform:scaleX(0.9050);">192.168.50.1</div>
<div class="t" style="top:179px;font-size:12px;line-height:15px;color:#000;left:450.36px;transform-origin:0 0;transform:scaleX(0.8979);">192.168.50.100</div>
<div class="t" style="top:179px;font-size:12px;line-height:15px;color:#000;left:542.15px;width:118.10px;text-align:right;transform-origin:100% 0;transform:scaleX(0.9308);">Aug/25/2020 15:50:32</div>
<svg style="position:absolute;left:19px;top:149px;" width="13" height="14" viewBox="0 0 13 14"><circle cx="6.5" cy="6.3" r="5.6" fill="#e4008c" stroke="#000" stroke-width="1"/><circle cx="4" cy="3.8" r="1.2" fill="#ff9ad8"/><rect x="5" y="3.4" width="3.6" height="1.8" rx="0.8" fill="#ffee00" stroke="#000" stroke-width="0.9"/><path d="M5,6.5 H8.5 V11 H9.5 V13.2 H4.5 V11 H5.5 V8.5 H5 Z" fill="#ffee00" stroke="#000" stroke-width="1"/></svg>
<svg style="position:absolute;left:19px;top:164px;" width="13" height="14" viewBox="0 0 13 14"><circle cx="6.5" cy="6.3" r="5.6" fill="#c4c4c4" stroke="#9a9a9a" stroke-width="1"/><circle cx="4" cy="3.8" r="1.2" fill="#e8e8e8"/><rect x="5" y="3.4" width="3.6" height="1.8" rx="0.8" fill="#dcdcdc" stroke="#9a9a9a" stroke-width="0.9"/><path d="M5,6.5 H8.5 V11 H9.5 V13.2 H4.5 V11 H5.5 V8.5 H5 Z" fill="#dcdcdc" stroke="#9a9a9a" stroke-width="1"/></svg>
<div style="left:7px;top:405px;width:746px;height:1px;background:#a0a0a0"></div>
<div style="left:7px;top:425px;width:748px;height:1px;background:#c8c8c8"></div>
<div style="left:3px;top:179px;width:395px;height:340px;background:#f0f0f0"></div>
<div style="left:3px;top:179px;width:395px;height:1px;background:#000"></div>
<div style="left:3px;top:179px;width:1px;height:340px;background:#000"></div>
<div style="left:396px;top:179px;width:1px;height:340px;background:#000"></div>
<div style="left:397px;top:179px;width:1px;height:340px;background:rgba(0,0,0,.35)"></div>
<div style="left:3px;top:517px;width:395px;height:2px;background:#000"></div>
<div style="left:4px;top:180px;width:392px;height:22px;background:#4b50cc"></div>
<div class="t" style="top:186px;font-size:12px;line-height:15px;color:#fff;left:8.97px;transform-origin:0 0;transform:scaleX(0.8872);">PPP Secret &lt;huawei1&gt;</div>
<div style="left:361px;top:184px;width:15px;height:15px;background:#f0f0f0;border:1px solid #3a3a3a;box-sizing:border-box;box-shadow:inset 0 0 0 1px #fff"></div>
<div style="left:378px;top:184px;width:15px;height:15px;background:#f0f0f0;border:1px solid #3a3a3a;box-sizing:border-box;box-shadow:inset 0 0 0 1px #fff"></div>
<div style="left:364px;top:187px;width:9px;height:9px;border:1px solid #333;border-top-width:2px;box-sizing:border-box;background:#e8e8e8"></div>
<svg style="position:absolute;left:381px;top:188px;" width="8" height="7" viewBox="0 0 8 7"><path d="M1,0.8 L7,6.2 M7,0.8 L1,6.2" stroke="#333" stroke-width="2"/></svg>
<div class="t" style="top:211px;font-size:12px;line-height:15px;color:#000;left:58.68px;width:35.34px;text-align:right;transform-origin:100% 0;transform:scaleX(0.8750);">Name:</div>
<div style="left:98px;top:209px;width:192px;height:17px;background:#fff;border:1px solid #a0a0a0;box-sizing:border-box"></div>
<div style="left:99.5px;top:211px;width:42px;height:13px;background:#3475d8"></div>
<div style="left:141px;top:211px;width:1px;height:13px;background:#000"></div>
<div class="t" style="top:211px;font-size:12px;line-height:15px;color:#fff;left:100.05px;transform-origin:0 0;transform:scaleX(0.9154);">huawei1</div>
<div class="t" style="top:234px;font-size:12px;line-height:15px;color:#000;left:38.01px;width:56.02px;text-align:right;transform-origin:100% 0;transform:scaleX(0.8797);">Password:</div>
<div style="left:98px;top:232px;width:174px;height:17px;background:#fff;border:1px solid #a0a0a0;box-sizing:border-box"></div>
<div class="t" style="top:234px;font-size:12px;line-height:15px;color:#000;left:100.07px;transform-origin:0 0;transform:scaleX(0.8750);">*******</div>
<svg style="position:absolute;left:277px;top:238px;" width="11" height="5" viewBox="0 0 11 5"><path d="M0,5 H11 L5.5,-0.5 Z" fill="#000"/></svg>
<div class="t" style="top:257px;font-size:12px;line-height:15px;color:#000;left:50.70px;width:43.35px;text-align:right;transform-origin:100% 0;transform:scaleX(0.9068);">Service:</div>
<div style="left:98px;top:255px;width:174px;height:17px;background:#fff;border:1px solid #a0a0a0;box-sizing:border-box"></div>
<div class="t" style="top:257px;font-size:12px;line-height:15px;color:#000;left:100.07px;transform-origin:0 0;transform:scaleX(0.8750);">pppoe</div>
<div style="left:273px;top:255px;width:17px;height:17px;background:#f0f0f0;border:1px solid #9a9a9a;box-sizing:border-box"></div>
<svg style="position:absolute;left:277px;top:260px;" width="9" height="9" viewBox="0 0 9 9"><rect x="1" y="0" width="7" height="1.6" fill="#000"/><rect x="3.4" y="2.2" width="2.2" height="3" fill="#000"/><path d="M0.8,4.2 H8.2 L4.5,8.2 Z" fill="#000"/></svg>
<div class="t" style="top:280px;font-size:12px;line-height:15px;color:#000;left:44.02px;width:50.01px;text-align:right;transform-origin:100% 0;transform:scaleX(0.8750);">Caller ID:</div>
<div style="left:98px;top:278px;width:174px;height:17px;background:#f0f0f0;border:1px solid #a0a0a0;box-sizing:border-box"></div>
<svg style="position:absolute;left:277px;top:284px;" width="11" height="5" viewBox="0 0 11 5"><path d="M0,0 H11 L5.5,5.5 Z" fill="#000"/></svg>
<div class="t" style="top:303px;font-size:12px;line-height:15px;color:#000;left:56.68px;width:37.35px;text-align:right;transform-origin:100% 0;transform:scaleX(0.8750);">Profile:</div>
<div style="left:98px;top:301px;width:174px;height:17px;background:#fff;border:1px solid #a0a0a0;box-sizing:border-box"></div>
<div class="t" style="top:303px;font-size:12px;line-height:15px;color:#000;left:100.06px;transform-origin:0 0;transform:scaleX(0.9034);">huawei_v110_20megas</div>
<div style="left:273px;top:301px;width:17px;height:17px;background:#f0f0f0;border:1px solid #9a9a9a;box-sizing:border-box"></div>
<svg style="position:absolute;left:277px;top:306px;" width="9" height="9" viewBox="0 0 9 9"><rect x="1" y="0" width="7" height="1.6" fill="#000"/><rect x="3.4" y="2.2" width="2.2" height="3" fill="#000"/><path d="M0.8,4.2 H8.2 L4.5,8.2 Z" fill="#000"/></svg>
<div style="left:12px;top:325px;width:278px;height:1px;background:#a8a8a8"></div>
<div class="t" style="top:334px;font-size:12px;line-height:15px;color:#000;left:15.32px;width:78.71px;text-align:right;transform-origin:100% 0;transform:scaleX(0.8892);">Local Address:</div>
<div style="left:98px;top:332px;width:174px;height:17px;background:#f0f0f0;border:1px solid #a0a0a0;box-sizing:border-box"></div>
<svg style="position:absolute;left:277px;top:338px;" width="11" height="5" viewBox="0 0 11 5"><path d="M0,0 H11 L5.5,5.5 Z" fill="#000"/></svg>
<div class="t" style="top:357px;font-size:12px;line-height:15px;color:#000;left:1.98px;width:92.05px;text-align:right;transform-origin:100% 0;transform:scaleX(0.8809);">Remote Address:</div>
<div style="left:98px;top:355px;width:174px;height:17px;background:#fff;border:1px solid #a0a0a0;box-sizing:border-box"></div>
<div class="t" style="top:357px;font-size:12px;line-height:15px;color:#000;left:100.06px;transform-origin:0 0;transform:scaleX(0.9044);">192.168.42.80</div>
<svg style="position:absolute;left:277px;top:361px;" width="11" height="5" viewBox="0 0 11 5"><path d="M0,5 H11 L5.5,-0.5 Z" fill="#000"/></svg>
<div style="left:12px;top:379px;width:278px;height:1px;background:#a8a8a8"></div>
<div class="t" style="top:388px;font-size:12px;line-height:15px;color:#000;left:52.69px;width:41.35px;text-align:right;transform-origin:100% 0;transform:scaleX(0.8995);">Routes:</div>
<div style="left:98px;top:386px;width:174px;height:17px;background:#f0f0f0;border:1px solid #a0a0a0;box-sizing:border-box"></div>
<svg style="position:absolute;left:277px;top:392px;" width="11" height="5" viewBox="0 0 11 5"><path d="M0,0 H11 L5.5,5.5 Z" fill="#000"/></svg>
<div style="left:12px;top:410px;width:278px;height:1px;background:#a8a8a8"></div>
<div class="t" style="top:419px;font-size:12px;line-height:15px;color:#000;left:18.67px;width:75.36px;text-align:right;transform-origin:100% 0;transform:scaleX(0.8750);">Limit Bytes In:</div>
<div style="left:98px;top:417px;width:174px;height:17px;background:#f0f0f0;border:1px solid #a0a0a0;box-sizing:border-box"></div>
<svg style="position:absolute;left:277px;top:423px;" width="11" height="5" viewBox="0 0 11 5"><path d="M0,0 H11 L5.5,5.5 Z" fill="#000"/></svg>
<div class="t" style="top:442px;font-size:12px;line-height:15px;color:#000;left:9.33px;width:84.69px;text-align:right;transform-origin:100% 0;transform:scaleX(0.8663);">Limit Bytes Out:</div>
<div style="left:98px;top:440px;width:174px;height:17px;background:#f0f0f0;border:1px solid #a0a0a0;box-sizing:border-box"></div>
<svg style="position:absolute;left:277px;top:446px;" width="11" height="5" viewBox="0 0 11 5"><path d="M0,0 H11 L5.5,5.5 Z" fill="#000"/></svg>
<div style="left:12px;top:464px;width:278px;height:1px;background:#a8a8a8"></div>
<div class="t" style="top:473px;font-size:12px;line-height:15px;color:#000;left:1.97px;width:92.07px;text-align:right;transform-origin:100% 0;transform:scaleX(0.8916);">Last Logged Out:</div>
<div style="left:98px;top:471px;width:192px;height:17px;background:#f0f0f0;border:1px solid #a0a0a0;box-sizing:border-box"></div>
<div class="t" style="top:473px;font-size:12px;line-height:15px;color:#000;left:100.03px;transform-origin:0 0;transform:scaleX(0.9482);">Oct/13/2020 18:17:06</div>
<div style="left:306px;top:208px;width:82px;height:23px;background:#f0f0f0;border:1px solid #000;box-sizing:border-box;box-shadow:inset 0 0 0 1px #fcfcfc"></div>
<div class="t" style="top:213px;font-size:12px;line-height:15px;color:#000;left:338.63px;width:17.34px;text-align:center;transform-origin:50% 0;transform:scaleX(0.8750);">OK</div>
<div style="left:306px;top:234px;width:82px;height:23px;background:#f0f0f0;border:1px solid #7a7a7a;box-sizing:border-box;box-shadow:inset 0 0 0 1px #fcfcfc"></div>
<div class="t" style="top:239px;font-size:12px;line-height:15px;color:#000;left:328.62px;width:37.35px;text-align:center;transform-origin:50% 0;transform:scaleX(0.8750);">Cancel</div>
<div style="left:306px;top:260px;width:82px;height:23px;background:#f0f0f0;border:1px solid #7a7a7a;box-sizing:border-box;box-shadow:inset 0 0 0 1px #fcfcfc"></div>
<div class="t" style="top:265px;font-size:12px;line-height:15px;color:#000;left:332.29px;width:30.02px;text-align:center;transform-origin:50% 0;transform:scaleX(0.8750);">Apply</div>
<div style="left:306px;top:291px;width:82px;height:23px;background:#f0f0f0;border:1px solid #7a7a7a;box-sizing:border-box;box-shadow:inset 0 0 0 1px #fcfcfc"></div>
<div class="t" style="top:296px;font-size:12px;line-height:15px;color:#000;left:327.29px;width:40.02px;text-align:center;transform-origin:50% 0;transform:scaleX(0.8750);">Disable</div>
<div style="left:306px;top:317px;width:82px;height:23px;background:#f0f0f0;border:1px solid #7a7a7a;box-sizing:border-box;box-shadow:inset 0 0 0 1px #fcfcfc"></div>
<div class="t" style="top:322px;font-size:12px;line-height:15px;color:#000;left:321.29px;width:52.01px;text-align:center;transform-origin:50% 0;transform:scaleX(0.8750);">Comment</div>
<div style="left:306px;top:343px;width:82px;height:23px;background:#f0f0f0;border:1px solid #7a7a7a;box-sizing:border-box;box-shadow:inset 0 0 0 1px #fcfcfc"></div>
<div class="t" style="top:348px;font-size:12px;line-height:15px;color:#000;left:333.29px;width:28.01px;text-align:center;transform-origin:50% 0;transform:scaleX(0.8750);">Copy</div>
<div style="left:306px;top:369px;width:82px;height:23px;background:#f0f0f0;border:1px solid #7a7a7a;box-sizing:border-box;box-shadow:inset 0 0 0 1px #fcfcfc"></div>
<div class="t" style="top:374px;font-size:12px;line-height:15px;color:#000;left:324.96px;width:44.68px;text-align:center;transform-origin:50% 0;transform:scaleX(0.8750);">Remove</div>
<div style="left:6px;top:496px;width:386px;height:1px;background:#a0a0a0"></div>
<div style="left:6px;top:496px;width:1px;height:19px;background:#a0a0a0"></div>
<div class="t" style="top:498px;font-size:12px;line-height:15px;color:#000;left:8.38px;transform-origin:0 0;transform:scaleX(0.8750);">enabled</div>
<div style="left:2px;top:514px;width:502px;height:70px;border:4px solid #f00000;box-sizing:border-box;box-shadow:3px 3px 4px rgba(0,0,0,.5), inset 2px 3px 3px rgba(0,0,0,.35)"></div>
</body></html>
